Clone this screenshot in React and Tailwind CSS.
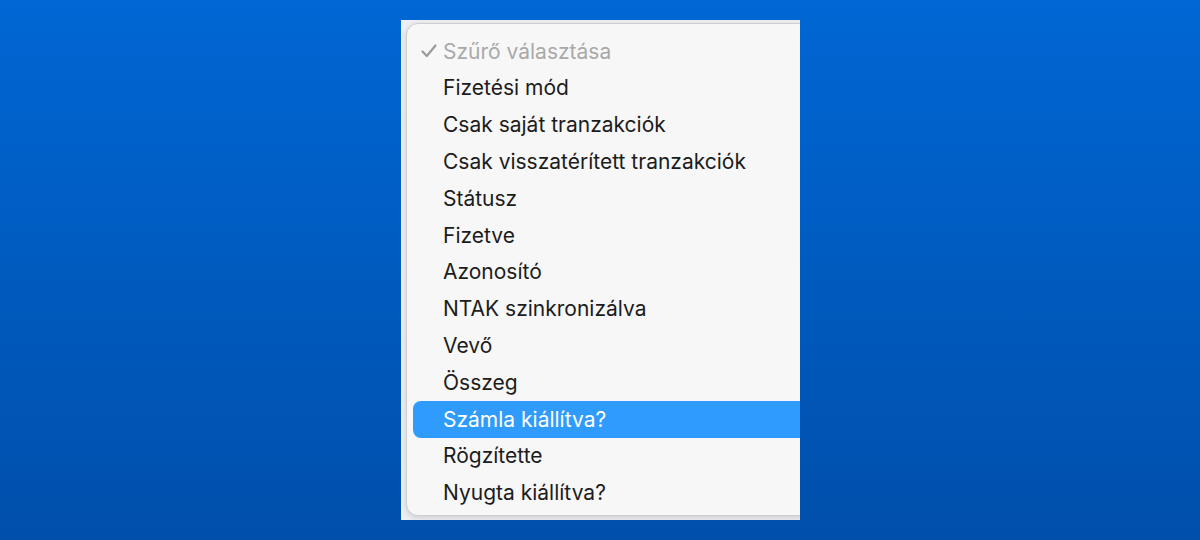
import React from "react";

const items = [
  "Fizetési mód",
  "Csak saját tranzakciók",
  "Csak visszatérített tranzakciók",
  "Státusz",
  "Fizetve",
  "Azonosító",
  "NTAK szinkronizálva",
  "Vevő",
  "Összeg",
  "Számla kiállítva?",
  "Rögzítette",
  "Nyugta kiállítva?",
];

export default function App() {
  return (
    <div
      className="w-[1200px] h-[540px] bg-gradient-to-b from-[#0067d4] to-[#004fab] pt-[20px] pl-[401px]"
      style={{ fontFamily: "Inter, 'Noto Sans', sans-serif" }}
    >
      <div className="w-[399px] h-[500px] bg-[#eef0f3] overflow-hidden pt-[3px] pl-[5px]">
        <div className="w-[420px] h-[493px] bg-[#f7f7f7] rounded-l-[12px] border border-[#cfcfcf] shadow-[0_2px_6px_rgba(0,0,0,0.15)] pt-[9px] pl-[6px]">
          <div className="h-[36.8px] flex items-center text-[21px] text-[#a9a9a9]">
            <span className="w-[30px] pl-[8px] flex items-center">
              <svg width="16" height="14" viewBox="0 0 16 14" fill="none">
                <path d="M1.5 7.5 L5.8 12 L14.5 1.5" stroke="#9a9a9a" strokeWidth="2.2" strokeLinecap="round" strokeLinejoin="round" />
              </svg>
            </span>
            <span>Szűrő választása</span>
          </div>
          {items.map((t) => {
            const active = t === "Számla kiállítva?";
            return (
              <div
                key={t}
                className={
                  active
                    ? "h-[36.8px] flex items-center text-[21px] text-white bg-[#2f9bfd] rounded-l-[8px] pl-[30px]"
                    : "h-[36.8px] flex items-center text-[21px] text-[#1c1c1c] pl-[30px]"
                }
              >
                {t}
              </div>
            );
          })}
        </div>
      </div>
    </div>
  );
}
